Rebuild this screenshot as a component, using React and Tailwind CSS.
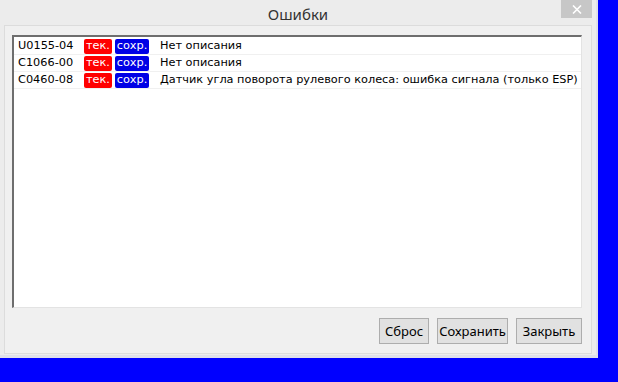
import React from 'react'

const ROWS = [
  { code: 'U0155-04', text: 'Нет описания' },
  { code: 'C1066-00', text: 'Нет описания' },
  { code: 'C0460-08', text: 'Датчик угла поворота рулевого колеса: ошибка сигнала (только ESP)' },
]

const listFont = { fontFamily: 'Tahoma, "DejaVu Sans", sans-serif' }

function Row({ code, text }) {
  return (
    <div className="flex items-center h-[17px] border-b border-[#f0f0f0] text-[11.3px] leading-none text-black whitespace-nowrap">
      <span className="w-[70px] shrink-0 pl-[4px]">{code}</span>
      <span className="shrink-0 h-[15px] w-[28px] flex items-center justify-center rounded-[2px] bg-[#ff0000] text-white">тек.</span>
      <span className="shrink-0 ml-[3px] h-[15px] w-[34px] flex items-center justify-center rounded-[2px] bg-[#0000e6] text-white">сохр.</span>
      <span className="ml-[11px]">{text}</span>
    </div>
  )
}

function Btn({ children, w }) {
  return (
    <button className={'h-[26px] border border-[#adadad] bg-[#e1e1e1] text-[13px] text-black leading-none ' + w}>
      {children}
    </button>
  )
}

export default function App() {
  return (
    <div className="w-[618px] h-[382px] bg-[#0000ff] overflow-hidden" style={{ fontFamily: '"Noto Sans", "Open Sans", sans-serif' }}>
      <div className="w-[598px] h-[358px] bg-[#ececec] flex flex-col border-b-[3px] border-r-[2px] border-[#dfe0ea]">
        {/* title bar */}
        <div className="relative h-[25px] flex items-center justify-center">
          <span className="text-[15px] text-[#333] mt-[3px]">Ошибки</span>
          <div className="absolute right-[4px] top-0 w-[31px] h-[18px] bg-[#c7c7c7] flex items-center justify-center">
            <svg width="10" height="9" viewBox="0 0 10 9">
              <path d="M1 0.5 L9 8.5 M9 0.5 L1 8.5" stroke="#fff" strokeWidth="1.6" />
            </svg>
          </div>
        </div>

        {/* body */}
        <div className="flex-1 mx-[4px] mb-[2px] border border-[#dcdcdc] bg-[#f0f0f0] flex flex-col pt-[9px] pl-[7px] pr-[9px] pb-[9px]">
          <div className="h-[273px] bg-white border-t-2 border-l-2 border-[#6e6e6e] border-r border-b border-r-[#e3e3e3] border-b-[#e3e3e3] pt-[1px]" style={listFont}>
            {ROWS.map(r => <Row key={r.code} {...r} />)}
          </div>
          <div className="flex justify-end gap-[8px] mt-[10px]">
            <Btn w="w-[50px]">Сброс</Btn>
            <Btn w="w-[71px]">Сохранить</Btn>
            <Btn w="w-[66px]">Закрыть</Btn>
          </div>
        </div>
      </div>
    </div>
  )
}
